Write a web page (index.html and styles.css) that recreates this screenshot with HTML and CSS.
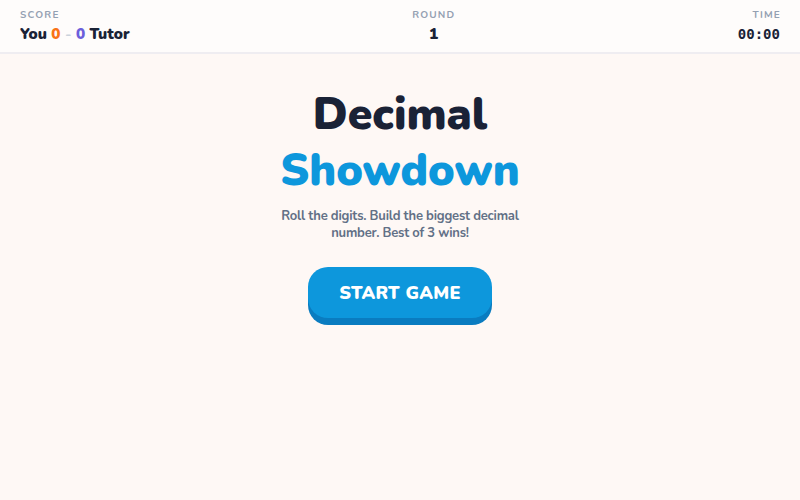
FILE: index.html
```html
<!DOCTYPE html>
<html>
<head>
<meta charset="utf-8">
<link rel="stylesheet" href="styles.css">
</head>
<body>
<header class="topbar">
  <div class="stat stat-left">
    <div class="label">SCORE</div>
    <div class="value">You <span class="you">0</span> <span class="dash">-</span> <span class="tutor">0</span> Tutor</div>
  </div>
  <div class="stat stat-center">
    <div class="label">ROUND</div>
    <div class="value">1</div>
  </div>
  <div class="stat stat-right">
    <div class="label">TIME</div>
    <div class="value mono">00:00</div>
  </div>
</header>
<main class="intro">
  <h1 class="title"><span class="t1">Decimal</span><span class="t2">Showdown</span></h1>
  <p class="sub">Roll the digits. Build the biggest decimal number. Best of 3 wins!</p>
  <button class="start">START GAME</button>
</main>
</body>
</html>
```
FILE: styles.css
```css
html, body {
  margin: 0;
  padding: 0;
}
body {
  width: 800px;
  height: 500px;
  background: #fef8f5;
  font-family: "Nunito", "Lato", "Noto Sans", sans-serif;
  color: #1e293b;
  overflow: hidden;
}
.topbar {
  height: 54px;
  box-sizing: border-box;
  background: #fefcfb;
  border-bottom: 2px solid #efedf1;
  display: flex;
  justify-content: space-between;
  align-items: center;
  padding: 1px 20px 0;
}
.stat {
  display: flex;
  flex-direction: column;
  gap: 3px;
}
.stat-center { align-items: center; }
.stat-right { align-items: flex-end; }
.label {
  font-size: 10px;
  font-weight: 700;
  letter-spacing: 1.2px;
  color: #94a0b2;
  line-height: 12px;
}
.stat-right .label { margin-right: -1px; }
.value {
  font-size: 15.3px;
  font-weight: 900;
  line-height: 20px;
  color: #1a2236;
}
.you { color: #f97316; }
.tutor { color: #6c5fdb; }
.dash { color: #cbd2dc; font-weight: 700; }
.mono {
  font-family: "DejaVu Sans Mono", monospace;
  font-weight: 700;
  font-size: 14px;
}
.intro {
  display: flex;
  flex-direction: column;
  align-items: center;
  padding-top: 33px;
}
.title {
  margin: 0;
  display: flex;
  flex-direction: column;
  align-items: center;
  font-size: 44.5px;
  font-weight: 900;
  line-height: 56px;
}
.t1 { color: #1a2236; }
.t2 { color: #0d97dc; }
.sub {
  margin: 9px 0 0;
  width: 250px;
  text-align: center;
  font-size: 13px;
  font-weight: 700;
  letter-spacing: -0.2px;
  line-height: 17px;
  color: #627086;
}
.start {
  margin-top: 25px;
  width: 184px;
  height: 51px;
  border: none;
  border-radius: 20px;
  background: #0d97dc;
  box-shadow: 0 7px 0 #0a7cc0;
  color: #fff;
  font-family: inherit;
  font-size: 18px;
  font-weight: 900;
  letter-spacing: 0.3px;
}
```
